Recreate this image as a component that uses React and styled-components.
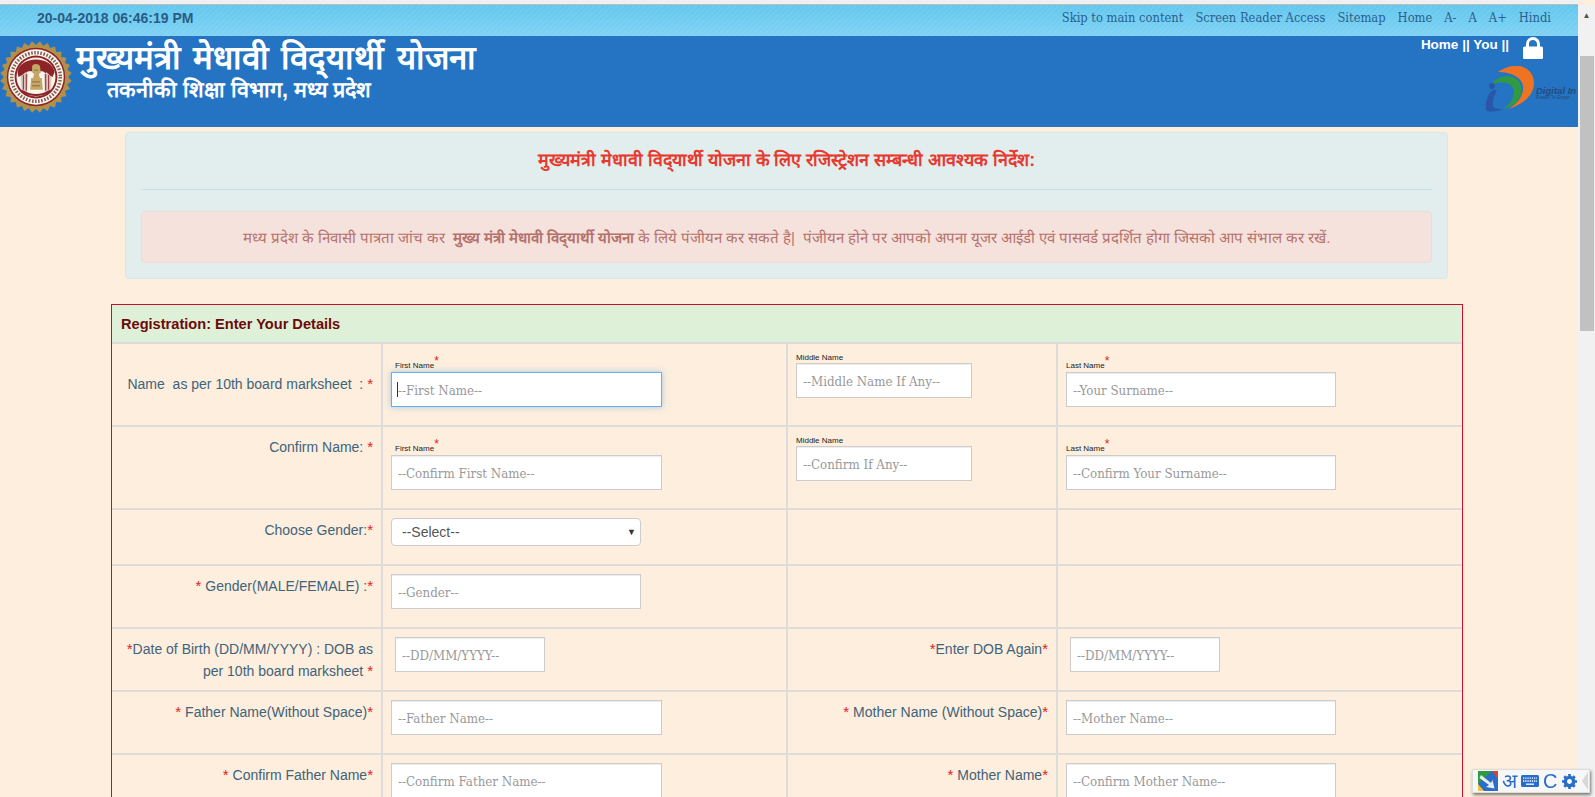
import React from 'react';
import styled, { createGlobalStyle } from 'styled-components';

const Global = createGlobalStyle`
  html, body { margin: 0; padding: 0; height: 100%; overflow: hidden; background: #fdeedd; }
  * { box-sizing: border-box; }
  input::placeholder { color: #999; opacity: 1; }
`;

const Shell = styled.div`
  display: flex;
  height: 797px;
  width: 1595px;
  overflow: hidden;
  font-family: "Liberation Sans", Arial, sans-serif;
  font-size: 14px;
`;
const Main = styled.div`
  width: 1578px;
  flex: none;
  display: flex;
  flex-direction: column;
  & > * { flex: none; }
`;
const TopEdge = styled.div`
  height: 5px;
  background: #f0f0f0;
  border-bottom: 1px solid #bdbdbd;
`;
const UtilBar = styled.div`
  height: 31px;
  background: repeating-linear-gradient(135deg, rgba(255,255,255,.05) 0 2px, transparent 2px 4px), linear-gradient(180deg, #62c7ee, #7fd2f3);
  display: flex;
  align-items: center;
  justify-content: space-between;
  padding: 0 27px 6px 37px;
`;
const DateText = styled.span`
  font-size: 14px;
  font-weight: 700;
  color: #2a5c84;
`;
const UtilLinks = styled.nav`
  display: flex;
  gap: 12px;
  font-family: "DejaVu Serif Condensed", "DejaVu Serif", serif;
  font-size: 12.8px;
  color: #2a5f8f;
`;
const Header = styled.header`
  height: 91px;
  background: #2474c3;
  display: flex;
  justify-content: space-between;
`;
const Brand = styled.div`
  display: flex;
  padding: 3px 0 0 0;
  gap: 4px;
`;
const EmblemSlot = styled.div`
  margin-top: 2px;
  width: 72px;
  height: 72px;
  & > svg { display: block; }
`;
const Titles = styled.div`
  color: #fff;
  font-weight: 700;
`;
const Title = styled.div`
  font-size: 33px;
  line-height: 38px;
  word-spacing: 3px;
`;
const SubTitle = styled.div`
  font-size: 21.5px;
  line-height: 26px;
  padding-left: 31px;
`;
const HeaderRight = styled.div`
  display: flex;
  flex-direction: column;
  align-items: flex-end;
`;
const UserLine = styled.div`
  display: flex;
  align-items: flex-start;
  gap: 14px;
  color: #fff;
  font-weight: 700;
  font-size: 13.5px;
  line-height: 16px;
  padding: 1px 35px 0 0;
`;
const LogoSlot = styled.div`
  margin-top: 7px;
  width: 93px;
  height: 48px;
`;
const Content = styled.main`
  display: flex;
  flex-direction: column;
  align-items: flex-start;
`;
const Notice = styled.section`
  margin: 5px 0 0 125px;
  width: 1323px;
  height: 147px;
  background: #e2eeee;
  border: 1px solid #d6e9e9;
  border-radius: 4px;
  padding: 0 15px;
`;
const NoticeTitle = styled.div`
  color: #e8392f;
  font-weight: 700;
  font-size: 17.8px;
  text-align: center;
  padding-top: 14px;
  height: 57px;
  border-bottom: 1px solid #c4e2e6;
`;
const NoticeBody = styled.div`
  margin-top: 21px;
  height: 52px;
  background: #f5e2dd;
  border: 1px solid #ecdcd8;
  border-radius: 4px;
  color: #b5726c;
  font-size: 15px;
  word-spacing: -0.15px;
  text-align: center;
  line-height: 51px;
  white-space: nowrap;
`;
const Table = styled.section`
  margin: 25px 0 0 111px;
  width: 1352px;
  border: 1px solid #c9102a;
  border-bottom: 0;
`;
const Heading = styled.div`
  height: 37px;
  background: #dff0d8;
  color: #6b0a0a;
  font-weight: 700;
  font-size: 14.6px;
  line-height: 38px;
  padding-left: 9px;
`;
const Row = styled.div`
  display: grid;
  grid-template-columns: 269px 405px 270px 1fr;
  height: ${p => p.$h}px;
  border-top: 2px solid #dedcd8;
`;
const Cell = styled.div`
  border-left: ${p => (p.$first ? 0 : '2px solid #dedcd8')};
  padding: ${p => p.$pt ?? 8}px 8px 0 ${p => p.$pl ?? 8}px;
`;
const Label = styled.div`
  color: #41637a;
  text-align: right;
  font-size: 14px;
  line-height: 21px;
`;
const Req = styled.span`
  color: #e0201c;
  font-size: 15px;
`;
const MiniStar = styled.span`
  color: #e0201c;
  font-size: 12px;
  line-height: 8px;
  vertical-align: 3px;
`;
const Mini = styled.div`
  display: flex;
  align-items: center;
  font-size: 8px;
  height: ${p => (p.$req ? 18 : 12)}px;
  color: #222;
  padding-left: ${p => p.$pl ?? 0}px;
`;
const Field = styled.input`
  display: block;
  width: ${p => p.$w}px;
  height: 35px;
  border: 1px solid ${p => (p.$focus ? '#66afe9' : '#ccc')};
  box-shadow: ${p => (p.$focus ? '0 0 6px rgba(102,175,233,.6)' : 'inset 0 1px 1px rgba(0,0,0,.075)')};
  background: #fff;
  padding: 1px 6px 0;
  font-family: "DejaVu Serif Condensed", "DejaVu Serif", serif;
  font-size: 13.2px;
  border-radius: 0;
  outline: 0;
`;
const FocusWrap = styled.div`
  position: relative;
  width: fit-content;
  &::after {
    content: '';
    position: absolute;
    left: 6px;
    top: 10px;
    width: 1px;
    height: 15px;
    background: #333;
  }
`;
const SelectBox = styled.div`
  width: 250px;
  height: 28px;
  background: #fff;
  border: 1px solid #ccc;
  border-radius: 4px;
  display: flex;
  align-items: center;
  justify-content: space-between;
  padding: 0 4px 0 10px;
  color: #555;
  font-size: 14px;
`;
const Caret = styled.span`
  font-size: 9px;
  color: #333;
`;
const ScrollCol = styled.aside`
  width: 17px;
  flex: none;
  margin-top: 5px;
  background: #f1f1f1;
  display: flex;
  flex-direction: column;
  align-items: center;
`;
const ScrollArrow = styled.div`
  height: 17px;
  line-height: 17px;
  font-size: 8px;
  color: #505050;
  margin-top: 2px;
`;
const ScrollThumb = styled.div`
  margin-top: 32px;
  width: 14px;
  height: 275px;
  background: #c1c1c1;
`;
const ImeBar = styled.div`
  position: fixed;
  right: 5px;
  bottom: 4px;
  width: 118px;
  height: 24px;
  background: #f7f7f7;
  border: 1px solid #ddd;
  box-shadow: 1px 2px 3px rgba(0,0,0,.5);
  display: flex;
  align-items: center;
  gap: 4px;
  padding: 0 0 0 5px;
  color: #2a6cc7;
  font-size: 20px;
  line-height: 22px;
`;
const ImeChevron = styled.span`
  width: 0;
  height: 0;
  border-top: 9px solid transparent;
  border-bottom: 9px solid transparent;
  border-right: 6px solid #d8d8d8;
`;

const Emblem = () => {
  const pts = [];
  for (let i = 0; i < 56; i++) {
    const r = i % 2 ? 37 : 33;
    const a = (i / 56) * Math.PI * 2;
    pts.push(`${37 + r * Math.cos(a)},${37 + r * Math.sin(a)}`);
  }
  return (
    <svg width="72" height="72" viewBox="0 0 74 74">
      <polygon points={pts.join(' ')} fill="#b3904a" />
      <circle cx="37" cy="37" r="30" fill="#8e2328" />
      <circle cx="37" cy="37" r="28.5" fill="#fbf5ea" />
      <circle cx="37" cy="37" r="25" fill="none" stroke="#5a2a2a" strokeWidth="3.5" strokeDasharray="1.6 1.6" opacity=".75" />
      <circle cx="37" cy="37" r="22" fill="#8e2328" />
      <circle cx="37" cy="37" r="20" fill="#fbf5ea" />
      <path d="M18 32c1-8 9-13 19-13s18 5 19 13l-2 5-6-3-4-3H29l-4 3-6 3z" fill="#8e2328" />
      <path d="M21 37l1 12 3 4 3-1 1-18-3-2zM53 37l-1 12-3 4-3-1-1-18 3-2z" fill="#d8c9c2" />
      <path d="M24 35v15M27 34v17M50 35v15M47 34v17" stroke="#8e2328" strokeWidth="1" />
      <path d="M33 26c1-3 7-3 8 0l1 6-2 2 1 4h2l1 12H31l1-12h2l1-4-2-2z" fill="#c4a768" />
      <path d="M33 42h8M33 46h8M35 30h4" stroke="#8c6d30" strokeWidth="1" />
      <path d="M22 51q15 9 30 0" stroke="#8e2328" strokeWidth="2" fill="none" />
    </svg>
  );
};
const Lock = () => (
  <svg width="20" height="22" viewBox="0 0 20 22">
    <path d="M4.5 10V7a5.5 5.5 0 0 1 11 0v3" fill="none" stroke="#fff" strokeWidth="3" />
    <rect x="0" y="9.5" width="20" height="12.5" rx="1.5" fill="#fff" />
  </svg>
);
const DigitalIndia = () => (
  <svg width="93" height="48" viewBox="0 0 93 48">
    <path d="M13 6C20 1 28-1 35 0c9 2 14 9 14 17 0 12-11 22-26 26 9-5 16-13 15-23C37 12 27 6 13 6z" fill="#ee7322" />
    <path d="M6 19C11 11 22 8 30 12c7 4 8 13 5 19-3 6-9 10-17 12 6-4 11-10 11-17 0-8-11-13-23-7z" fill="#2f9a44" />
    <path d="M1 44C0 36 3 27 8 24h4C9 30 7 36 8 40c1 3 6 3 10 3-5 2-14 4-17 1z" fill="#2a55a8" />
    <circle cx="7" cy="20" r="3" fill="#2a55a8" />
    <text x="51" y="28" fontFamily="Liberation Sans" fontWeight="700" fontStyle="italic" fontSize="9.5" fill="#24497a">Digital In</text>
    <text x="51" y="33" fontFamily="Liberation Sans" fontSize="4.8" fill="#24497a">Power To Empo</text>
  </svg>
);
const ImeLogo = () => (
  <svg width="20" height="20" viewBox="0 0 20 20">
    <rect width="20" height="20" fill="#2a6cc7" />
    <path d="M0 0h14L0 13z" fill="#2f9a44" />
    <path d="M0 13v7h6z" fill="#f2c230" />
    <path d="M14 0h6v8z" fill="#d9432f" />
    <path d="M3 4l10 8 1.5-3 2 8.5-8.5-1.5 3-2L1.5 7z" fill="#e8eef0" />
  </svg>
);
const Keyboard = () => (
  <svg width="18" height="12" viewBox="0 0 18 12">
    <rect width="18" height="12" rx="1.5" fill="#2a6cc7" />
    <path d="M2 3.2h14M2 6h14" stroke="#fff" strokeWidth="1.3" strokeDasharray="1.3 .9" />
    <path d="M5 9.2h8" stroke="#fff" strokeWidth="1.3" />
  </svg>
);
const Gear = () => (
  <svg width="17" height="17" viewBox="0 0 18 18">
    <circle cx="9" cy="9" r="4.5" fill="none" stroke="#2a6cc7" strokeWidth="3.4" />
    <path d="M9 1v16M1 9h16M3.4 3.4l11.2 11.2M14.6 3.4L3.4 14.6" stroke="#2a6cc7" strokeWidth="2.8" />
    <circle cx="9" cy="9" r="2.6" fill="#fff" />
  </svg>
);

const S = () => <Req>*</Req>;

const Small = ({ label, req, pl }) => (
  <Mini $req={req} $pl={pl}><span>{label}{req && <MiniStar>*</MiniStar>}</span></Mini>
);

const SCHEME = 'मुख्यमंत्री मेधावी विद्\u200Cयार्थी योजना';
const SCHEME_SPACED = 'मुख्य मंत्री मेधावी विद्\u200Cयार्थी योजना';

export default function App() {
  return (
    <Shell>
      <Global />
      <Main>
        <TopEdge />
        <UtilBar>
          <DateText>20-04-2018 06:46:19 PM</DateText>
          <UtilLinks>
            <span>Skip to main content</span><span>Screen Reader Access</span><span>Sitemap</span><span>Home</span><span>A-</span><span>A</span><span>A+</span><span>Hindi</span>
          </UtilLinks>
        </UtilBar>
        <Header>
          <Brand>
            <EmblemSlot><Emblem /></EmblemSlot>
            <Titles>
              <Title>{SCHEME}</Title>
              <SubTitle>तकनीकी शिक्षा विभाग, मध्य प्रदेश</SubTitle>
            </Titles>
          </Brand>
          <HeaderRight>
            <UserLine><span>Home || You ||</span><Lock /></UserLine>
            <LogoSlot><DigitalIndia /></LogoSlot>
          </HeaderRight>
        </Header>
        <Content>
          <Notice>
            <NoticeTitle>{`${SCHEME} के लिए रजिस्ट्रेशन सम्बन्धी आवश्यक निर्देश:`}</NoticeTitle>
            <NoticeBody>मध्य प्रदेश के निवासी पात्रता जांच कर &nbsp;<b>{SCHEME_SPACED}</b> के लिये पंजीयन कर सकते है| &nbsp;पंजीयन होने पर आपको अपना यूजर आईडी एवं पासवर्ड प्रदर्शित होगा जिसको आप संभाल कर रखें.</NoticeBody>
          </Notice>
          <Table>
            <Heading>Registration: Enter Your Details</Heading>
            <Row $h={83}>
              <Cell $first $pt={29}><Label>Name &nbsp;as per 10th board marksheet &nbsp;: <S /></Label></Cell>
              <Cell $pt={10}><Small label="First Name" req pl={4} /><FocusWrap><Field $w={271} $focus placeholder="--First Name--" /></FocusWrap></Cell>
              <Cell $pt={7}><Small label="Middle Name" /><Field $w={176} placeholder="--Middle Name If Any--" /></Cell>
              <Cell $pt={10}><Small label="Last Name" req /><Field $w={270} placeholder="--Your Surname--" /></Cell>
            </Row>
            <Row $h={83}>
              <Cell $first $pt={9}><Label>Confirm Name: <S /></Label></Cell>
              <Cell $pt={10}><Small label="First Name" req pl={4} /><Field $w={271} placeholder="--Confirm First Name--" /></Cell>
              <Cell $pt={7}><Small label="Middle Name" /><Field $w={176} placeholder="--Confirm If Any--" /></Cell>
              <Cell $pt={10}><Small label="Last Name" req /><Field $w={270} placeholder="--Confirm Your Surname--" /></Cell>
            </Row>
            <Row $h={56}>
              <Cell $first $pt={9}><Label>Choose Gender:<S /></Label></Cell>
              <Cell $pt={8}><SelectBox><span>--Select--</span><Caret>▼</Caret></SelectBox></Cell>
              <Cell /><Cell />
            </Row>
            <Row $h={63}>
              <Cell $first $pt={9}><Label><S /> Gender(MALE/FEMALE) :<S /></Label></Cell>
              <Cell><Field $w={250} placeholder="--Gender--" /></Cell>
              <Cell /><Cell />
            </Row>
            <Row $h={63}>
              <Cell $first $pt={9}><Label><S />Date of Birth (DD/MM/YYYY) : DOB as<br />per 10th board marksheet <S /></Label></Cell>
              <Cell $pl={12}><Field $w={150} placeholder="--DD/MM/YYYY--" /></Cell>
              <Cell $pt={9}><Label><S />Enter DOB Again<S /></Label></Cell>
              <Cell $pl={12}><Field $w={150} placeholder="--DD/MM/YYYY--" /></Cell>
            </Row>
            <Row $h={63}>
              <Cell $first $pt={9}><Label><S /> Father Name(Without Space)<S /></Label></Cell>
              <Cell><Field $w={271} placeholder="--Father Name--" /></Cell>
              <Cell $pt={9}><Label><S /> Mother Name (Without Space)<S /></Label></Cell>
              <Cell><Field $w={270} placeholder="--Mother Name--" /></Cell>
            </Row>
            <Row $h={63}>
              <Cell $first $pt={9}><Label><S /> Confirm Father Name<S /></Label></Cell>
              <Cell><Field $w={271} placeholder="--Confirm Father Name--" /></Cell>
              <Cell $pt={9}><Label><S /> Mother Name<S /></Label></Cell>
              <Cell><Field $w={270} placeholder="--Confirm Mother Name--" /></Cell>
            </Row>
          </Table>
        </Content>
      </Main>
      <ScrollCol>
        <ScrollArrow>▲</ScrollArrow>
        <ScrollThumb />
      </ScrollCol>
      <ImeBar><ImeLogo /><span>अ</span><Keyboard /><span>C</span><Gear /><ImeChevron /></ImeBar>
    </Shell>
  );
}
